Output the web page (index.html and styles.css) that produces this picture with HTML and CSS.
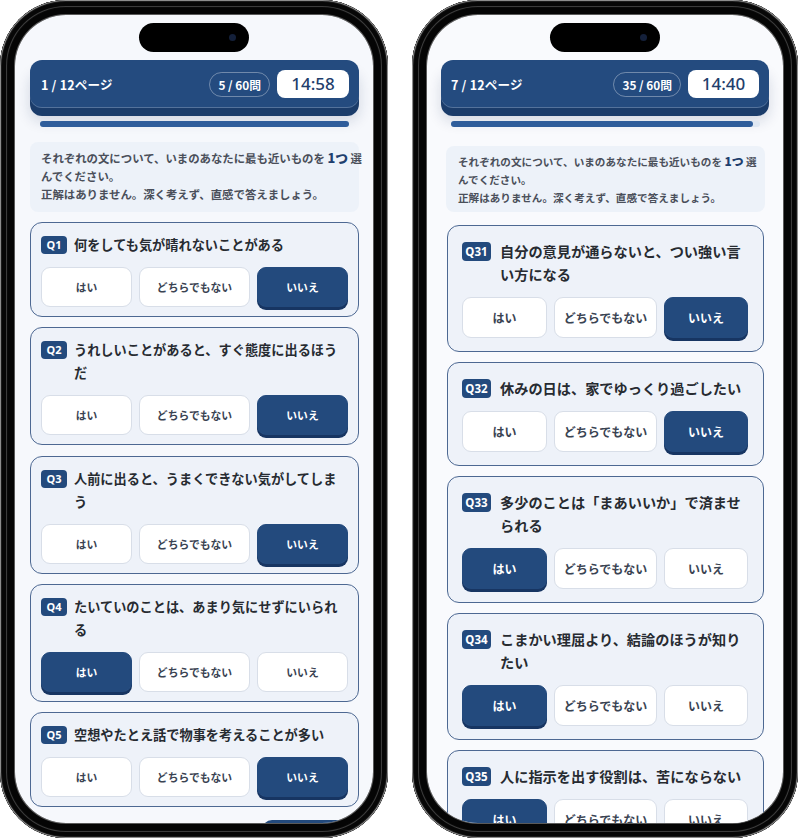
FILE: index.html
```html
<!DOCTYPE html>
<html lang="ja">
<head>
<meta charset="utf-8">
<title>診断テスト</title>
<link rel="stylesheet" href="styles.css">
</head>
<body>
<div class="stage">
  <div class="phone phone--a">
    <div class="screen">
      <div class="island"><span class="cam"></span></div>
      <div class="content">
        <header class="topbar">
          <span class="page">1 / 12ページ</span>
          <span class="count">5 / 60問</span>
          <span class="timer">14:58</span>
        </header>
        <div class="progress"><div class="progress-fill" style="width:100%"></div></div>
        <div class="notice">それぞれの文について、いまのあなたに最も近いものを <b>1つ</b> 選<br>んでください。<br>正解はありません。深く考えず、直感で答えましょう。</div>
        <div class="cards">
          <section class="card">
            <div class="q"><span class="qno">Q1</span><p class="qtext">何をしても気が晴れないことがある</p></div>
            <div class="opts"><div class="opt">はい</div><div class="opt">どちらでもない</div><div class="opt on">いいえ</div></div>
          </section>
          <section class="card">
            <div class="q"><span class="qno">Q2</span><p class="qtext">うれしいことがあると、すぐ態度に出るほう<br>だ</p></div>
            <div class="opts"><div class="opt">はい</div><div class="opt">どちらでもない</div><div class="opt on">いいえ</div></div>
          </section>
          <section class="card">
            <div class="q"><span class="qno">Q3</span><p class="qtext">人前に出ると、うまくできない気がしてしま<br>う</p></div>
            <div class="opts"><div class="opt">はい</div><div class="opt">どちらでもない</div><div class="opt on">いいえ</div></div>
          </section>
          <section class="card">
            <div class="q"><span class="qno">Q4</span><p class="qtext">たいていのことは、あまり気にせずにいられ<br>る</p></div>
            <div class="opts"><div class="opt on">はい</div><div class="opt">どちらでもない</div><div class="opt">いいえ</div></div>
          </section>
          <section class="card">
            <div class="q"><span class="qno">Q5</span><p class="qtext">空想やたとえ話で物事を考えることが多い</p></div>
            <div class="opts"><div class="opt">はい</div><div class="opt">どちらでもない</div><div class="opt on">いいえ</div></div>
          </section>
        </div>
        <div class="peek"></div>
      </div>
    </div>
  </div>

  <div class="phone phone--b">
    <div class="screen">
      <div class="island"><span class="cam"></span></div>
      <div class="content">
        <header class="topbar">
          <span class="page">7 / 12ページ</span>
          <span class="count">35 / 60問</span>
          <span class="timer">14:40</span>
        </header>
        <div class="progress"><div class="progress-fill" style="width:97.7%"></div></div>
        <div class="notice">それぞれの文について、いまのあなたに最も近いものを <b>1つ</b> 選<br>んでください。<br>正解はありません。深く考えず、直感で答えましょう。</div>
        <div class="cards">
          <section class="card">
            <div class="q"><span class="qno">Q31</span><p class="qtext">自分の意見が通らないと、つい強い言<br>い方になる</p></div>
            <div class="opts"><div class="opt">はい</div><div class="opt">どちらでもない</div><div class="opt on">いいえ</div></div>
          </section>
          <section class="card">
            <div class="q"><span class="qno">Q32</span><p class="qtext">休みの日は、家でゆっくり過ごしたい</p></div>
            <div class="opts"><div class="opt">はい</div><div class="opt">どちらでもない</div><div class="opt on">いいえ</div></div>
          </section>
          <section class="card">
            <div class="q"><span class="qno">Q33</span><p class="qtext">多少のことは「まあいいか」で済ませ<br>られる</p></div>
            <div class="opts"><div class="opt on">はい</div><div class="opt">どちらでもない</div><div class="opt">いいえ</div></div>
          </section>
          <section class="card">
            <div class="q"><span class="qno">Q34</span><p class="qtext">こまかい理屈より、結論のほうが知り<br>たい</p></div>
            <div class="opts"><div class="opt on">はい</div><div class="opt">どちらでもない</div><div class="opt">いいえ</div></div>
          </section>
          <section class="card">
            <div class="q"><span class="qno">Q35</span><p class="qtext">人に指示を出す役割は、苦にならない</p></div>
            <div class="opts"><div class="opt on">はい</div><div class="opt">どちらでもない</div><div class="opt">いいえ</div></div>
          </section>
        </div>
      </div>
    </div>
  </div>
</div>
</body>
</html>
```

FILE: styles.css
```css
* { box-sizing: border-box; margin: 0; padding: 0; }

body {
  margin: 0;
  background: #ffffff;
  font-family: "Noto Sans CJK JP", "Noto Sans", "Liberation Sans", sans-serif;
}

.stage {
  display: flex;
  gap: 24px;
  width: 800px;
  height: 840px;
}

/* phone frame */
.phone {
  flex: none;
  height: 838px;
  padding: 15px;
  border-radius: 66px;
  background: #0b0b0b;
  box-shadow:
    inset 0 0 0 1px #8d8d8d,
    inset 0 0 0 2px #1c1c1c,
    inset 0 0 0 6px #070707,
    inset 0 0 0 7px #3c3c3c,
    inset 0 0 0 8px #0a0a0a,
    inset 0 0 0 14px #050505,
    inset 0 0 0 15px #5a5a5a;
}
.phone--a { width: 388px; }
.phone--b { width: 386px; }

.screen {
  position: relative;
  height: 100%;
  border-radius: 51px;
  overflow: hidden;
  background: #f6f8fc;
}
.phone--b .screen { background: #f9fafd; }

.island {
  position: absolute;
  top: 8px;
  left: 50%;
  margin-left: -55px;
  width: 110px;
  height: 29px;
  border-radius: 15px;
  background: #000;
  z-index: 2;
}
.cam {
  position: absolute;
  right: 13px;
  top: 11px;
  width: 7px;
  height: 7px;
  border-radius: 50%;
  background: #14203a;
}

.content { padding-top: 45px; }
.phone--a .content { padding-left: 15px; padding-right: 14px; }
.phone--b .content { padding-left: 14px; padding-right: 14px; }

/* header */
.topbar {
  display: flex;
  align-items: center;
  height: 48px;
  padding: 0 10px 0 11px;
  border-radius: 12px;
  background: #244b7f;
  color: #fff;
  box-shadow:
    inset 0 -1px 0 rgba(255, 255, 255, 0.22),
    0 8px 0 #1b3c6a,
    0 13px 14px rgba(20, 40, 80, 0.16);
}
.phone--b .topbar { padding-left: 10px; }

.page {
  margin-right: auto;
  font-size: 12.5px;
  font-weight: 700;
  letter-spacing: 0.2px;
}
.count {
  height: 25px;
  padding: 0 8px;
  border: 1px solid rgba(255, 255, 255, 0.35);
  border-radius: 13px;
  font-size: 11.8px;
  font-weight: 700;
  line-height: 23px;
}
.timer {
  margin-left: 7px;
  width: 72px;
  height: 28px;
  border-radius: 8px;
  background: #fff;
  color: #1f3e6c;
  font-family: "Noto Sans", "Liberation Sans", sans-serif;
  font-size: 17px;
  font-weight: 500;
  line-height: 28px;
  text-align: center;
}
.phone--b .timer { width: 71px; margin-left: 7px; }

/* progress */
.progress {
  height: 6px;
  margin: 13px 10px 0;
  border-radius: 3px;
  background: #dfe7f2;
}
.phone--b .progress { margin: 13px 9px 0 10px; }
.progress-fill {
  height: 100%;
  border-radius: 3px;
  background: #2f5d9b;
}

/* instructions */
.notice {
  margin-top: 15px;
  height: 70px;
  padding: 7px 11px 9px;
  border-radius: 8px;
  background: #edf2f9;
  color: #4a4f5a;
  font-size: 11.4px;
  font-weight: 700;
  line-height: 18px;
  white-space: nowrap;
}
.notice b {
  color: #1f3f6e;
  font-size: 1.12em;
}
.phone--b .notice {
  margin: 19px 4px 0 5px;
  height: 66px;
  padding: 6px 12px;
  font-size: 10.6px;
}

/* cards */
.cards {
  display: flex;
  flex-direction: column;
  gap: 10.25px;
  margin-top: 10px;
}
.phone--b .cards {
  gap: 10px;
  margin: 13px 5px 0 6px;
}

.card {
  padding: 10px 10px 9px;
  border: 1px solid #4d6892;
  border-radius: 12px;
  background: #eef2f9;
}
.phone--b .card { padding: 14px 15px 13px 14px; }

.q {
  display: flex;
  align-items: flex-start;
  gap: 7px;
}
.phone--b .q { gap: 9px; }

.qno {
  flex: none;
  min-width: 26px;
  height: 18px;
  margin-top: 3px;
  padding: 0 3px;
  border-radius: 4px;
  background: #234a7d;
  color: #fff;
  font-family: "Noto Sans", "Liberation Sans", sans-serif;
  font-size: 11px;
  font-weight: 700;
  line-height: 18px;
  text-align: center;
}
.phone--b .qno {
  min-width: 29px;
  height: 19px;
  margin-top: 2px;
  font-size: 11.5px;
  line-height: 19px;
}

.qtext {
  color: #272b31;
  font-size: 13.2px;
  font-weight: 700;
  line-height: 23px;
  white-space: nowrap;
}
.phone--b .qtext {
  font-size: 14.2px;
  line-height: 23px;
}

.opts {
  display: grid;
  grid-template-columns: 91fr 111fr 91fr;
  gap: 7px;
  margin-top: 11px;
}
.phone--b .opts { grid-template-columns: 85fr 103fr 84fr; }

.opt {
  display: flex;
  align-items: center;
  justify-content: center;
  height: 40px;
  border: 1px solid #d8dee8;
  border-radius: 9px;
  background: #fff;
  color: #3a4352;
  font-size: 10.8px;
  font-weight: 700;
}
.phone--b .opt {
  height: 41px;
  font-size: 12px;
}
.opt.on {
  border-color: #234a7d;
  background: #234a7d;
  color: #fff;
  box-shadow: 0 3px 0 #173562;
}

.peek {
  width: 85px;
  height: 30px;
  margin: 13px 12px 0 auto;
  border-radius: 10px;
  background: #234a7d;
}
```
